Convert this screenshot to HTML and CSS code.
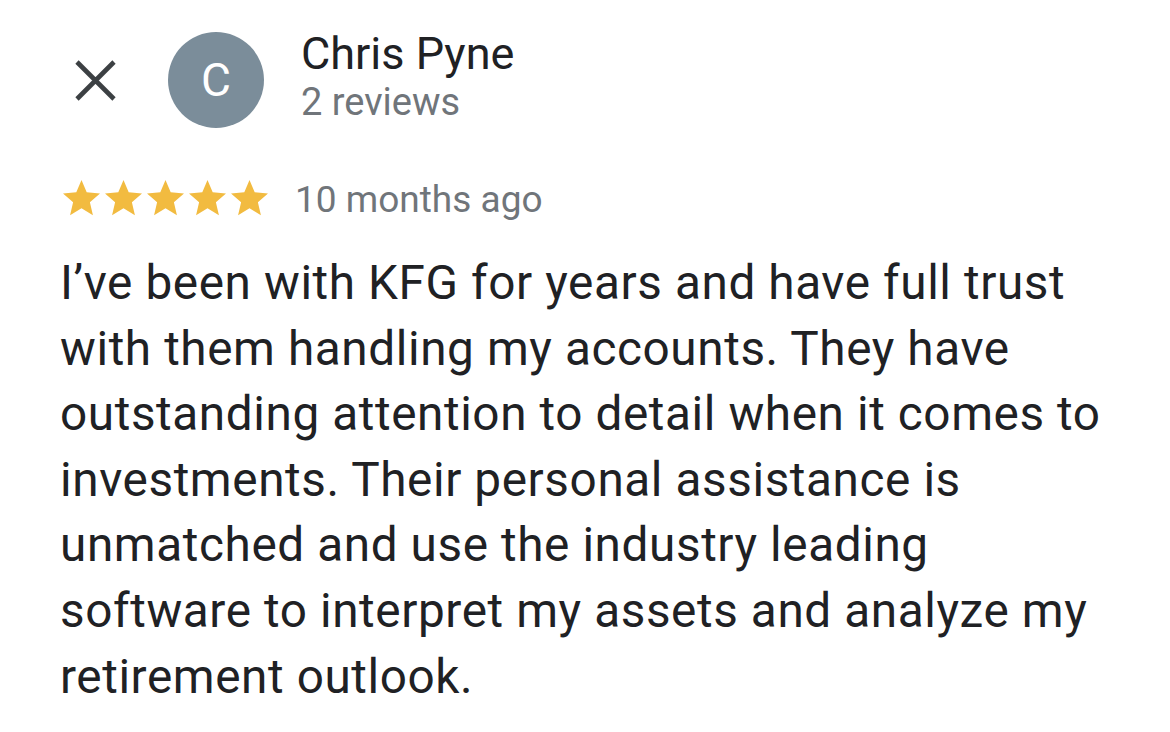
FILE: index.html
```html
<!DOCTYPE html>
<html lang="en">
<head>
<meta charset="utf-8">
<title>Review</title>
<link rel="stylesheet" href="styles.css">
</head>
<body>
<main class="review">
  <header class="review-header">
    <button class="close-btn" aria-label="Close">
      <svg viewBox="0 0 41 41" width="41" height="41"><path d="M2 2L39 39M39 2L2 39" stroke="#3c4043" stroke-width="4.6" fill="none"/></svg>
    </button>
    <div class="avatar">C</div>
    <div class="author">
      <div class="author-name">Chris Pyne</div>
      <div class="author-meta">2 reviews</div>
    </div>
  </header>
  <div class="rating-row">
    <div class="stars" aria-label="5 stars">
      <svg viewBox="2 2 20 19.2" class="star"><path d="M12 17.27L18.18 21l-1.64-7.03L22 9.24l-7.19-.61L12 2 9.19 8.630 2 9.24l5.46 4.73L5.82 21z"/></svg>
      <svg viewBox="2 2 20 19.2" class="star"><path d="M12 17.27L18.18 21l-1.64-7.03L22 9.24l-7.19-.61L12 2 9.19 8.63 2 9.24l5.46 4.73L5.82 21z"/></svg>
      <svg viewBox="2 2 20 19.2" class="star"><path d="M12 17.27L18.18 21l-1.64-7.03L22 9.24l-7.19-.61L12 2 9.19 8.63 2 9.24l5.46 4.73L5.82 21z"/></svg>
      <svg viewBox="2 2 20 19.2" class="star"><path d="M12 17.27L18.18 21l-1.64-7.03L22 9.24l-7.19-.61L12 2 9.19 8.63 2 9.24l5.46 4.73L5.82 21z"/></svg>
      <svg viewBox="2 2 20 19.2" class="star"><path d="M12 17.27L18.18 21l-1.64-7.03L22 9.24l-7.19-.61L12 2 9.19 8.63 2 9.24l5.46 4.73L5.82 21z"/></svg>
    </div>
    <span class="review-time">10 months ago</span>
  </div>
  <p class="review-text">I’ve been with KFG for years and have full trust with them handling my accounts. They have outstanding attention to detail when it comes to investments. Their personal assistance is unmatched and use the industry leading software to interpret my assets and analyze my retirement outlook.</p>
</main>
</body>
</html>
```

FILE: styles.css
```css
html, body {
  margin: 0;
  padding: 0;
  background: #ffffff;
}

body {
  font-family: Roboto, "Noto Sans", Arial, sans-serif;
  color: #202124;
  width: 1170px;
  height: 732px;
  overflow: hidden;
}

.review {
  padding: 32px 0 0 60px;
}

.review-header {
  display: flex;
  align-items: center;
  padding-left: 15px;
}

.close-btn {
  border: 0;
  background: none;
  padding: 0;
  width: 41px;
  height: 41px;
  display: block;
}

.close-btn svg {
  display: block;
}

.avatar {
  margin-left: 52px;
  width: 96px;
  height: 96px;
  border-radius: 50%;
  background: #7b8d9a;
  color: #ffffff;
  font-size: 46px;
  display: flex;
  align-items: center;
  justify-content: center;
}

.author {
  align-self: flex-start;
  margin-top: -2px;
  margin-left: 37px;
}

.author-name {
  font-size: 45px;
  line-height: 48px;
  color: #202124;
}

.author-meta {
  font-size: 38px;
  line-height: 48px;
  color: #70757a;
}

.rating-row {
  display: flex;
  align-items: center;
  margin-top: 52px;
  margin-left: 3px;
  height: 36px;
}

.stars {
  display: flex;
  gap: 5px;
}

.star {
  width: 37px;
  height: 35.5px;
  fill: #f2bb40;
  display: block;
}

.review-time {
  margin-left: 27px;
  padding-top: 3px;
  font-size: 37px;
  color: #70757a;
}

.review-text {
  margin: 35px 0 0 0;
  width: 1055px;
  font-size: 47.7px;
  line-height: 65.6px;
  letter-spacing: 0.6px;
  color: #202124;
}
```
